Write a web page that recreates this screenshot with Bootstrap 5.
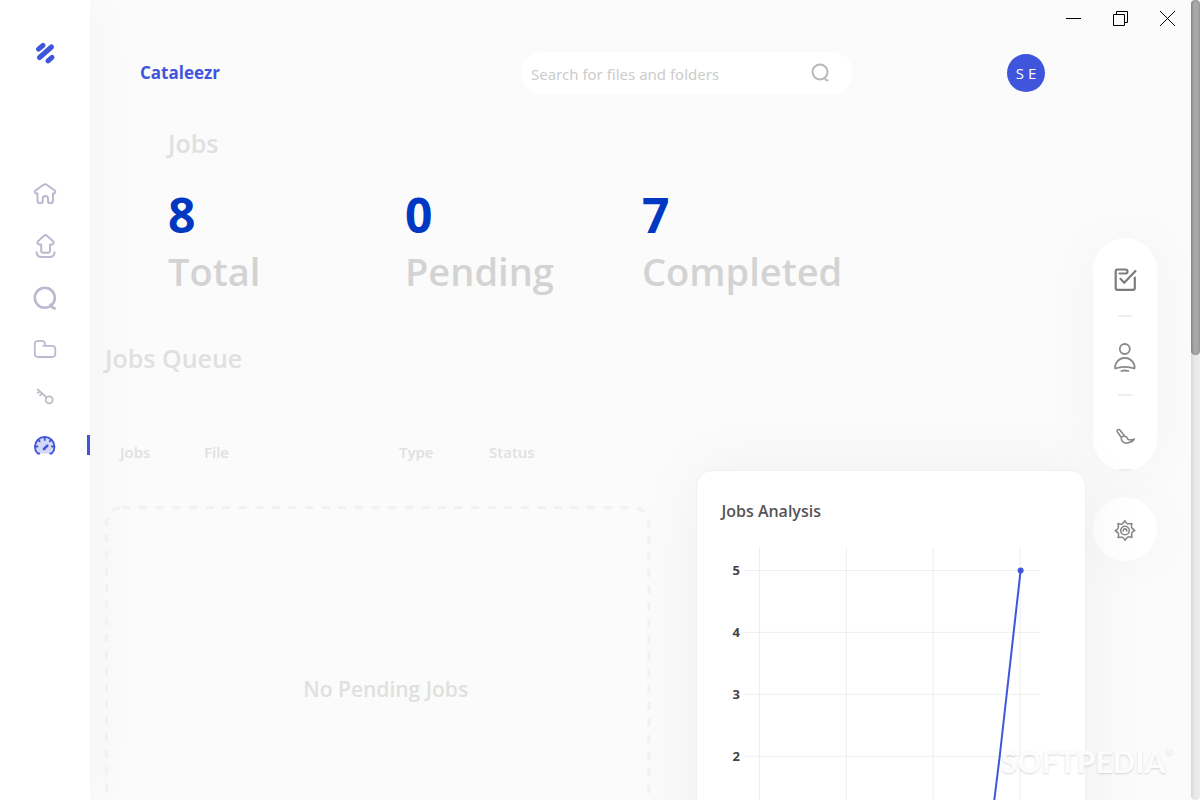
<!DOCTYPE html>
<html lang="en">
<head>
<meta charset="utf-8">
<meta name="viewport" content="width=device-width, initial-scale=1">
<title>Cataleezr</title>
<link href="https://cdn.jsdelivr.net/npm/bootstrap@5.3.0/dist/css/bootstrap.min.css" rel="stylesheet">
<style>
  body { font-family: "Open Sans", "Noto Sans", sans-serif; background: #fbfbfb; }
  svg { display: block; overflow: visible; fill: none; stroke: currentColor; stroke-linecap: round; stroke-linejoin: round; }
  button { border: 0; background: none; padding: 0; color: inherit; }

  .side { width: 90px; background: #fff; box-shadow: 0 0 60px rgba(0,0,0,.035); }
  .brand-mark { color: #3f55dc; padding: 40px 0 102px; }
  .side-link { height: 52px; width: 100%; color: #b9b9d0; position: relative; }
  .side-link.compact { height: 48px; }
  .side-link.active { color: #3f55dc; }
  .side-link.active::after { content: ""; position: absolute; right: 0; top: 11px; width: 3px; height: 20px; background: #3f55dc; }

  .winbar { height: 37px; }
  .winbar button { width: 47px; color: #000; }
  .winbar svg { stroke-linecap: butt; stroke-linejoin: miter; }

  .topbar { display: grid; grid-template-columns: 1fr 332px 192px; padding: 15px 41px 0 50px; }
  .brand-name { color: #3f55dc; font-size: 17px; font-weight: 700; text-decoration: none; }
  .finder { height: 42px; border-radius: 21px; background: #fff; padding: 0 24px 0 10px; }
  .finder input { border: 0; outline: 0; background: none; font-family: "Noto Sans", sans-serif; font-size: 15px; padding: 2px 0 0; color: #555; }
  .finder input::placeholder { color: #ccc; opacity: 1; }
  .finder button { color: #b8b8b8; }
  .avatar { width: 38px; height: 38px; background: #3f55dc; font-size: 15px; }

  .pale { color: #e0e0e0; font-weight: 600; }
  h2.pale { font-size: 25px; line-height: 32px; }
  .summary { padding: 33px 0 0 78px; }
  .stats { margin-top: 24px; }
  .stat { width: 237px; }
  .stat dd { font-size: 48px; line-height: 64px; font-weight: 700; color: #0038c3; }
  .stat dt { font-size: 38px; line-height: 48px; font-weight: 600; color: #d3d3d3; }
  .queue-title { padding: 47px 0 0 15px; }
  .lower { display: grid; grid-template-columns: 7fr 5fr; gap: 46px; padding-left: 15px; }
  .queue { padding-top: 66px; }
  .queue table { table-layout: fixed; font-size: 15px; line-height: 24px; }
  .queue th { padding: 0 0 0 15px; }
  .empty { position: relative; margin-top: 42px; padding-left: 16px; height: 368px; font-size: 21px; }
  .empty svg { position: absolute; inset: 0; width: 100%; height: 100%; color: #f1f1f1; stroke-linecap: butt; }
  .empty rect { width: calc(100% - 3px); height: calc(100% - 3px); }

  .content { z-index: 1; }
  .analysis { margin-top: 96px; padding: 28px 24px; border: 1px solid #f1f1f1; border-radius: 16px; background: #fff; box-shadow: 0 0 70px rgba(0,0,0,.05); }
  .analysis h3 { font-size: 16px; line-height: 24px; color: #555; font-weight: 600; }
  .analysis svg { width: 100%; margin-top: 25px; }
  .grid-lines { stroke: #eee; }
  .ticks { font-size: 13px; font-weight: 700; fill: #444; stroke: none; text-anchor: end; }

  .rail { width: 105px; padding: 201px 34px 0 7px; }
  .tools { border-radius: 32px; height: 233px; overflow: hidden; }
  .tools button { height: 77px; width: 100%; flex-shrink: 0; }
  .tools button:last-of-type { flex-shrink: 1; }
  .tools hr { width: 14px; height: 2px; margin: 0; border: 0; background: #eee; opacity: 1; flex: none; }
  .tools .strong { color: #7c7c7c; }
  .lift { box-shadow: 0 0 60px rgba(0,0,0,.04); color: #8a8a8a; background: #fff; }
  .gear { width: 64px; height: 64px; margin-top: 26px; }

  .scroll-track { width: 9px; border-radius: 5px; background: linear-gradient(90deg, #d9d9d9, #e8e8e8 40%, #ececec); }
  .scroll-thumb { height: 355px; border-radius: 5px; background: linear-gradient(90deg, #8c8c8c, #a9a9a9 40%, #a4a4a4); box-shadow: inset 0 0 2px #777; }
  .watermark { right: 27px; bottom: 19px; z-index: 2; font: 900 30px/40px Lato, sans-serif; color: #fcfcfc; text-shadow: 0 1px 2px rgba(0,0,0,.15); pointer-events: none; }
  .watermark sup { font-size: 9px; top: -18px; }
</style>
</head>
<body class="vh-100 overflow-hidden d-flex">

<nav class="side d-flex flex-column align-items-center flex-shrink-0" aria-label="Main">
  <a href="#" class="brand-mark" aria-label="Cataleezr home">
    <svg width="26" height="26" stroke-width="5"><path d="M6.500 9.200 11 5.300M7.500 17.500 19.500 7M16 20.800 20 17.300"/></svg>
  </a>
  <a href="#" class="side-link d-flex align-items-center justify-content-center" aria-label="Home">
    <svg width="24" height="24" stroke-width="2"><path d="M4.500 11.500H3Q1.200 10.300 2.200 8.800L10.500 2.800Q12.200 1.700 13.900 2.800L22 8.800Q23 10.500 21.200 11.500H20V18Q20 21.300 17.400 21.300 15 21.300 15 19V16.500Q15 14 12.400 14 9.700 14 9.700 16.500V19Q9.700 21.300 7.200 21.300 4.600 21.300 4.500 18.500Z"/></svg>
  </a>
  <a href="#" class="side-link d-flex align-items-center justify-content-center" aria-label="Upload">
    <svg width="24" height="24" stroke-width="2"><path d="M8.200 10.500H6Q3.700 9.500 4.800 7.500L11 1.700Q12.500.3 14 1.700L20.300 7.500Q21.500 9.500 19.200 10.500H17V16.500Q17 18.800 14.800 18.800H10.400Q8.200 18.800 8.200 16.500ZM3.500 18.300Q4 23 8.500 23H16.700Q21 23 21.600 18.300"/></svg>
  </a>
  <a href="#" class="side-link d-flex align-items-center justify-content-center" aria-label="Search">
    <svg width="24" height="24" stroke-width="2.600"><circle cx="11.800" cy="11.800" r="10"/><path d="M17.500 18.500 19.500 21.500 21.800 22.500"/></svg>
  </a>
  <a href="#" class="side-link d-flex align-items-center justify-content-center" aria-label="Folders">
    <svg width="24" height="24" stroke-width="1.800"><path d="M10.200 7.800H19Q22.300 7.800 22.300 10.800V15.500Q22.300 19 19 19H5Q1.800 19 1.800 15.500V6Q1.800 2.800 5.500 2.800H8.500Q12 2.800 12.200 6.800"/></svg>
  </a>
  <a href="#" class="side-link compact d-flex align-items-center justify-content-center" aria-label="Keys">
    <svg width="24" height="24" stroke-width="1.800" color="#bcbcc6"><circle cx="16.200" cy="11.800" r="3.500"/><path d="M13.400 9.300 4.800 1.500M7 3.500 4.700 4.800M9.500 5.500 7 7.300"/></svg>
  </a>
  <a href="#" class="side-link compact active d-flex align-items-center justify-content-center" aria-label="Dashboard" aria-current="page">
    <svg width="24" height="24" stroke-width="1.800"><path d="M5 17.500A9.800 9.800 0 1 1 18.500 17.500Z" fill="#d3d8f8" stroke="none"/><path d="M6.300 17.500H4.600A9.800 9.800 0 1 1 18.800 17.500H17.200M11.700 1.500V4M2 10.500H4.500M19 10.500H21.500M5.500 4 6.700 5.300M18 4 16.800 5.300"/><path d="M11 13 14.300 9.700" stroke-width="2.600"/></svg>
  </a>
</nav>

<div class="flex-grow-1 d-flex flex-column" style="min-width:0">
  <div class="winbar d-flex justify-content-end flex-shrink-0">
    <button type="button" class="d-flex align-items-center justify-content-center" aria-label="Minimize"><svg width="15" height="15"><path d="M0 7.500H15"/></svg></button>
    <button type="button" class="d-flex align-items-center justify-content-center" aria-label="Restore"><svg width="15" height="15"><path d="M.5 3.500H11.500V14.500H.5ZM3.500 3.500V.5H14.500V11.500H11.500"/></svg></button>
    <button type="button" class="d-flex align-items-center justify-content-center" aria-label="Close"><svg width="15" height="15"><path d="M0 0 15 15M15 0 0 15"/></svg></button>
  </div>

  <div class="d-flex">
    <main class="content position-relative flex-grow-1">
      <header class="topbar align-items-center">
        <div><a href="#" class="brand-name">Cataleezr</a></div>
        <form class="finder d-flex align-items-center" role="search">
          <input type="search" class="flex-grow-1" placeholder="Search for files and folders" aria-label="Search for files and folders">
          <button type="button" aria-label="Search"><svg width="18" height="20" stroke-width="2"><circle cx="9" cy="9" r="7.500"/><path d="M13.500 15 15 17 16.500 17.300"/></svg></button>
        </form>
        <div class="d-flex justify-content-end"><button type="button" class="avatar rounded-circle text-white">S E</button></div>
      </header>

      <section class="summary">
        <h2 class="pale m-0">Jobs</h2>
        <dl class="stats d-flex mb-0">
          <div class="stat d-flex flex-column-reverse"><dt>Total</dt><dd class="m-0">8</dd></div>
          <div class="stat d-flex flex-column-reverse"><dt>Pending</dt><dd class="m-0">0</dd></div>
          <div class="stat d-flex flex-column-reverse"><dt>Completed</dt><dd class="m-0">7</dd></div>
        </dl>
      </section>

      <h2 class="queue-title pale m-0">Jobs Queue</h2>
      <div class="lower">
        <section class="queue">
          <table class="w-100">
            <colgroup><col style="width:84px"><col style="width:195px"><col style="width:90px"><col></colgroup>
            <thead><tr><th class="pale">Jobs</th><th class="pale">File</th><th class="pale">Type</th><th class="pale">Status</th></tr></thead>
          </table>
          <div class="empty pale d-flex align-items-center justify-content-center">
            <svg stroke-width="3" stroke-dasharray="8 8.600" aria-hidden="true"><rect x="1.500" y="1.500" rx="16"/></svg>
            <span>No Pending Jobs</span>
          </div>
        </section>

        <section class="analysis">
          <h3 class="m-0">Jobs Analysis</h3>
          <svg viewBox="0 0 340 350" role="img" aria-label="Line chart of jobs">
            <g class="grid-lines">
              <path d="M24 22.500H319M24 84.500H319M24 146.500H319M24 208.500H319M24 270.500H319M24 332.500H319"/>
              <path d="M38.500 0V332M125.500 0V332M212.500 0V332M299.500 0V332"/>
            </g>
            <g class="ticks">
              <text x="19" y="27">5</text><text x="19" y="89">4</text><text x="19" y="151">3</text><text x="19" y="213">2</text>
            </g>
            <path d="M300 22.500 279 209 269 290Q263 332 252 332H38" stroke="#3f55dc" stroke-width="2"/>
            <circle cx="300" cy="22.500" r="3" fill="#3f55dc" stroke="none"/>
          </svg>
        </section>
      </div>
    </main>

    <aside class="rail flex-shrink-0" aria-label="Tools">
      <div class="tools lift d-flex flex-column align-items-center">
        <button type="button" class="strong d-flex align-items-center justify-content-center" aria-label="Tasks">
          <svg width="24" height="32" stroke-width="2.200"><path d="M6.500 12.500H12.500Q14.500 12.500 14.500 10.500 14.500 8.500 12.500 8.500H4.500Q2.700 8.500 2.700 10.300V27Q2.700 28.800 4.500 28.800H20Q21.800 28.800 21.800 27V16.500M7.500 17.800 11.200 21.800 22.500 10"/></svg>
        </button>
        <hr>
        <button type="button" class="d-flex align-items-center justify-content-center" aria-label="Profile">
          <svg width="24" height="32" stroke-width="1.800"><circle cx="11.800" cy="9" r="5"/><path d="M2.200 28.500Q1.500 26.500 3 23.500 6 18 11.800 18T20.800 23.500Q22.200 26.500 21.500 28.500 17 26.800 11.800 26.800T2.200 28.500ZM8.300 31Q11.800 30 15.400 31"/></svg>
        </button>
        <hr>
        <button type="button" class="d-flex align-items-center justify-content-center" aria-label="Theme">
          <svg width="24" height="32" stroke-width="1.600"><path d="M8.300 20.500 4.300 14.800Q3.700 13 5.200 12.500 6.300 12.300 7.200 13.300L11.500 19Q14 19.500 15 22.500 17.500 23.500 21.300 22 20 25 16.500 25.300 12.500 27.500 9.500 24.500 8 22.500 8.300 20.500 9.300 19 11.500 19"/></svg>
        </button>
        <hr>
      </div>
      <button type="button" class="gear lift rounded-circle d-flex align-items-center justify-content-center" aria-label="Settings">
        <svg width="24" height="24" viewBox="-12 -13.500 24 24" stroke-width="1.600"><path d="M0-9.800Q1.300-6.800 2.700-6.700T6.900-6.900Q5.900-3.700 6.700-2.700T9.800 0Q6.800 1.300 6.700 2.700T6.900 6.900Q3.700 5.900 2.700 6.700T0 9.800Q-1.300 6.800-2.700 6.700T-6.900 6.900Q-5.900 3.700-6.700 2.700T-9.800 0Q-6.800-1.300-6.700-2.700T-6.900-6.900Q-3.700-5.900-2.700-6.700T0-9.800Z"/><circle r="4.300"/><path d="M-1.800.5Q-1.800-1.600 0-1.600T1.800.5"/></svg>
      </button>
    </aside>
  </div>
</div>

<div class="scroll-track flex-shrink-0" aria-hidden="true"><div class="scroll-thumb"></div></div>
<div class="watermark position-absolute">SOFTPEDIA<sup>®</sup></div>

<script src="https://cdn.jsdelivr.net/npm/bootstrap@5.3.0/dist/js/bootstrap.bundle.min.js"></script>
</body>
</html>
